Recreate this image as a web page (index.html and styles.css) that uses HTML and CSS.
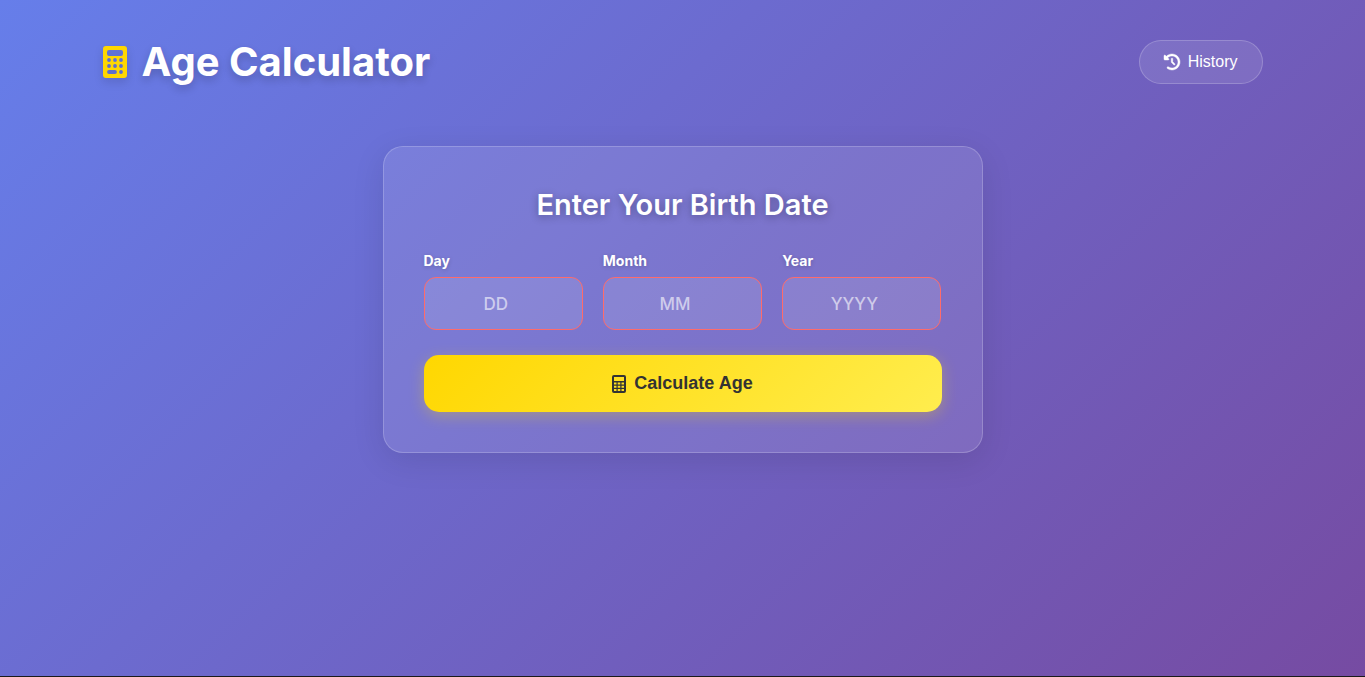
FILE: index.html
```html
<!DOCTYPE html>
<html lang="en">
<head>
<meta charset="utf-8">
<meta name="viewport" content="width=device-width, initial-scale=1">
<title>Age Calculator</title>
<link rel="stylesheet" href="styles.css">
</head>
<body>
<div class="container">
  <header class="header">
    <h1 class="title">
      <svg class="title-icon" viewBox="0 0 24 32" aria-hidden="true">
        <path fill="currentColor" fill-rule="evenodd" d="M3 0h18a3 3 0 0 1 3 3v26a3 3 0 0 1-3 3H3a3 3 0 0 1-3-3V3a3 3 0 0 1 3-3zM6 4a2 2 0 0 0-2 2v2a2 2 0 0 0 2 2h12a2 2 0 0 0 2-2V6a2 2 0 0 0-2-2zM6 12.100a1.900 1.900 0 1 0 0 3.800a1.900 1.900 0 1 0 0-3.800zM12 12.100a1.900 1.900 0 1 0 0 3.800a1.900 1.900 0 1 0 0-3.800zM18 12.100a1.900 1.900 0 1 0 0 3.800a1.900 1.900 0 1 0 0-3.800zM6 18.100a1.900 1.900 0 1 0 0 3.800a1.900 1.900 0 1 0 0-3.800zM12 18.100a1.900 1.900 0 1 0 0 3.800a1.900 1.900 0 1 0 0-3.800zM18 18.100a1.900 1.900 0 1 0 0 3.800a1.900 1.900 0 1 0 0-3.800zM6 24.100a1.900 1.900 0 1 0 0 3.800h6a1.900 1.900 0 1 0 0-3.800zM18 24.100a1.900 1.900 0 1 0 0 3.800a1.900 1.900 0 1 0 0-3.800z"/>
      </svg>
      Age Calculator
    </h1>
    <button class="history" type="button">
      <svg class="history-icon" viewBox="0 0 512 512" aria-hidden="true">
        <path fill="currentColor" stroke="currentColor" stroke-width="14" d="M75 75L41 41C25.900 25.900 0 36.600 0 57.900V168c0 13.300 10.700 24 24 24h110.100c21.400 0 32.100-25.900 17-41l-30.800-30.800C155 85.500 203 64 256 64c106 0 192 86 192 192s-86 192-192 192c-40.800 0-78.600-12.700-109.700-34.400-14.500-10.100-34.400-6.600-44.600 7.900s-6.600 34.400 7.900 44.600C151.200 495 201.700 512 256 512c141.400 0 256-114.600 256-256S397.400 0 256 0C185.300 0 121.300 28.700 75 75zm181 53c-13.300 0-24 10.700-24 24v104c0 6.400 2.500 12.500 7 17l72 72c9.400 9.400 24.600 9.400 33.900 0s9.400-24.600 0-33.900l-65-65V152c0-13.300-10.700-24-24-24z"/>
      </svg>
      History
    </button>
  </header>
  <main class="card">
    <h2 class="card-title">Enter Your Birth Date</h2>
    <form class="form">
      <div class="fields">
        <div class="field">
          <label class="label" for="day">Day</label>
          <input class="input" id="day" type="number" placeholder="DD" min="1" max="31">
        </div>
        <div class="field">
          <label class="label" for="month">Month</label>
          <input class="input" id="month" type="number" placeholder="MM" min="1" max="12">
        </div>
        <div class="field">
          <label class="label" for="year">Year</label>
          <input class="input" id="year" type="number" placeholder="YYYY" min="1900">
        </div>
      </div>
      <button class="calculate" type="submit">
        <svg class="calculate-icon" viewBox="0 0 14 18" aria-hidden="true">
          <path fill="currentColor" fill-rule="evenodd" d="M2 0h10a2 2 0 0 1 2 2v14a2 2 0 0 1-2 2H2a2 2 0 0 1-2-2V2a2 2 0 0 1 2-2zM2 2v4h10V2zM2 7.500v2h2.500v-2zM5.700 7.500v2h2.600v-2zM9.500 7.500v2H12v-2zM2 10.700v2h2.500v-2zM5.700 10.700v2h2.600v-2zM9.500 10.700v2H12v-2zM2 14v2h2.500v-2zM5.700 14v2h2.600v-2zM9.500 14v2H12v-2z"/>
        </svg>
        Calculate Age
      </button>
    </form>
  </main>
</div>
</body>
</html>
```
FILE: styles.css
```css
* {
  box-sizing: border-box;
  margin: 0;
  padding: 0;
}

html {
  height: 100%;
  background: #1a1a1a;
}

body {
  min-height: calc(100% - 1px);
  background: linear-gradient(135deg, #667eea 0%, #764ba2 100%);
  color: #fff;
  font-family: Inter, "Liberation Sans", sans-serif;
  line-height: 1.6;
  display: flow-root;
}

.container {
  max-width: 1200px;
  margin: 0 auto;
  padding: 20px;
}

.header {
  display: flex;
  justify-content: space-between;
  align-items: center;
  padding: 10px 0;
  margin-bottom: 42px;
}

.title {
  display: flex;
  align-items: center;
  gap: 15px;
  font-size: 40px;
  font-weight: 700;
  text-shadow: 0 4px 8px rgba(0, 0, 0, 0.2);
}

.title-icon {
  width: 24px;
  height: 32px;
  color: #ffd700;
  filter: drop-shadow(0 4px 4px rgba(0, 0, 0, 0.15));
}

.history {
  display: flex;
  align-items: center;
  gap: 8px;
  height: 44px;
  padding: 0 24px;
  border: 1px solid rgba(255, 255, 255, 0.2);
  border-radius: 22px;
  background: rgba(255, 255, 255, 0.1);
  color: #fff;
  font-family: "Liberation Sans", Arial, sans-serif;
  font-size: 16px;
  cursor: pointer;
}

.history-icon {
  width: 16px;
  height: 16px;
  overflow: visible;
}

.card {
  max-width: 600px;
  margin: 0 auto;
  padding: 34px 40px 40px;
  border: 1px solid rgba(255, 255, 255, 0.2);
  border-radius: 20px;
  background: rgba(255, 255, 255, 0.1);
  box-shadow: 0 8px 32px rgba(0, 0, 0, 0.1);
}

.card-title {
  margin-bottom: 22px;
  font-size: 29px;
  font-weight: 600;
  line-height: 48px;
  text-align: center;
  text-shadow: 0 2px 8px rgba(0, 0, 0, 0.3);
}

.fields {
  display: grid;
  grid-template-columns: repeat(3, 1fr);
  gap: 20px;
  margin-bottom: 25px;
}

.field {
  display: flex;
  flex-direction: column;
  gap: 6px;
}

.label {
  font-size: 14px;
  font-weight: 700;
  line-height: 20px;
  text-shadow: 0 1px 4px rgba(0, 0, 0, 0.2);
}

.input {
  width: 100%;
  height: 53px;
  padding: 0 16px;
  border: 1px solid #ff6b6b;
  border-radius: 12px;
  background: rgba(255, 255, 255, 0.1);
  color: #fff;
  font-family: inherit;
  font-size: 17px;
  font-weight: 500;
  text-align: center;
}

.input::placeholder {
  color: rgba(255, 255, 255, 0.6);
}

.calculate {
  display: flex;
  justify-content: center;
  align-items: center;
  gap: 8px;
  width: 100%;
  height: 57px;
  border: none;
  border-radius: 15px;
  background: linear-gradient(135deg, #ffd700, #ffed4e);
  box-shadow: 0 4px 15px rgba(255, 215, 0, 0.3);
  color: #333;
  font-family: "Liberation Sans", Arial, sans-serif;
  font-size: 18px;
  font-weight: 600;
  cursor: pointer;
}

.calculate-icon {
  width: 14px;
  height: 18px;
}

@media (max-width: 600px) {
  .fields {
    grid-template-columns: 1fr;
  }
}
```
